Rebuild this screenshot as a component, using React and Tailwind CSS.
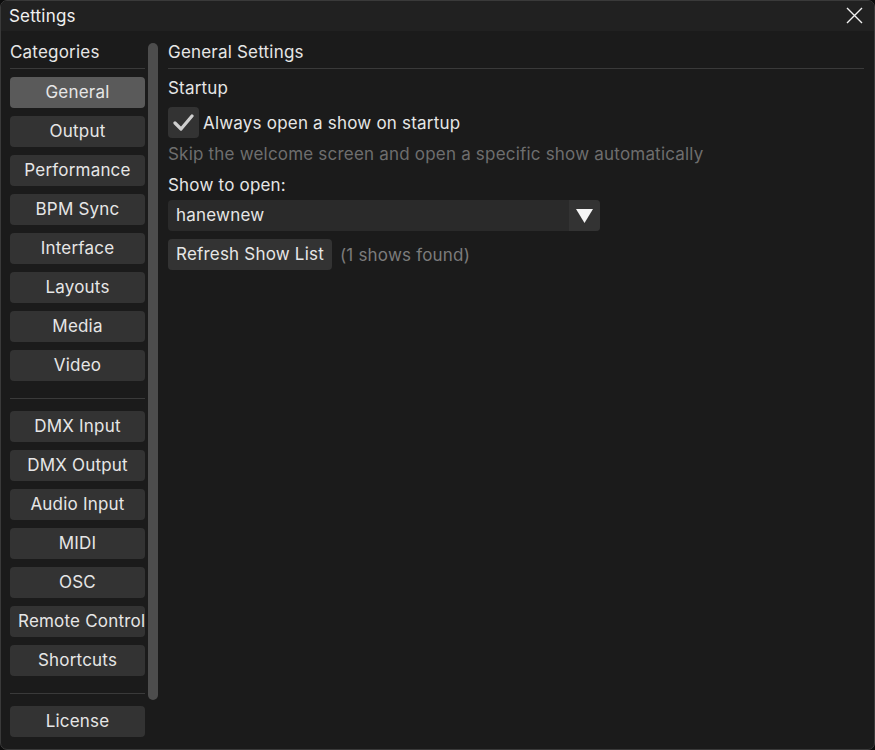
import React from "react";

const groupA = ["General", "Output", "Performance", "BPM Sync", "Interface", "Layouts", "Media", "Video"];
const groupB = ["DMX Input", "DMX Output", "Audio Input", "MIDI", "OSC", "Remote Control", "Shortcuts"];

function CategoryButton({ label, active }) {
  return (
    <button
      type="button"
      className={
        "h-[31px] w-[135px] shrink-0 overflow-hidden whitespace-nowrap rounded-[4px] px-[8px] text-center text-[17px] leading-[31px] text-[#e6e6e6] " +
        (active ? "bg-[#5a5a5a]" : "bg-[#333333]")
      }
    >
      {label}
    </button>
  );
}

function Divider({ className = "" }) {
  return <div className={"h-px w-full bg-[#3a3a3a] " + className} />;
}

export default function App() {
  return (
    <div className="h-[750px] w-[875px] bg-[#0c0c0c] font-['Inter',sans-serif] text-[17px] tracking-[0.2px] text-[#e6e6e6]">
      <div className="flex h-full flex-col overflow-hidden rounded-[7px] border border-[#3a3a3a] bg-[#1b1b1b]">
        {/* title bar */}
        <div className="flex h-[30px] shrink-0 items-center justify-between bg-[#212121] pl-[8px] pr-[11px]">
          <span className="leading-[22px] text-[#f0f0f0]">Settings</span>
          <svg width="17" height="17" viewBox="0 0 17 17" className="mt-[-1px]">
            <path d="M1 1 L16 16 M16 1 L1 16" stroke="#f2f2f2" strokeWidth="1.4" fill="none" />
          </svg>
        </div>

        <div className="flex flex-1 pt-[10px]">
          {/* categories */}
          <div className="flex w-[144px] shrink-0 flex-col gap-[8px] pl-[9px]">
            <div className="flex flex-col">
              <span className="leading-[22px]">Categories</span>
              <Divider className="mt-[5px]" />
            </div>
            {groupA.map((c) => (
              <CategoryButton key={c} label={c} active={c === "General"} />
            ))}
            <Divider className="mb-[4px] mt-[9px]" />
            {groupB.map((c) => (
              <CategoryButton key={c} label={c} />
            ))}
            <Divider className="mb-[4px] mt-[9px]" />
            <CategoryButton label="License" />
          </div>

          {/* scrollbar */}
          <div className="ml-[3px] mt-[2px] h-[657px] w-[10px] shrink-0 rounded-full bg-[#4d4d4d]" />

          {/* content */}
          <div className="ml-[10px] mr-[10px] flex flex-1 flex-col">
            <span className="leading-[22px]">General Settings</span>
            <Divider className="mt-[5px]" />
            <span className="mt-[8px] leading-[22px]">Startup</span>

            <div className="mt-[8px] flex items-center gap-[4px]">
              <div className="flex h-[31px] w-[31px] items-center justify-center rounded-[4px] bg-[#333333]">
                <svg width="21" height="17" viewBox="0 0 21 17">
                  <path d="M2 9 L8 15 L19 2" stroke="#cfcfcf" strokeWidth="3.2" fill="none" strokeLinecap="round" strokeLinejoin="round" />
                </svg>
              </div>
              <span className="leading-[22px]">Always open a show on startup</span>
            </div>

            <span className="mt-[5px] leading-[22px] text-[#6e6e6e]">
              Skip the welcome screen and open a specific show automatically
            </span>
            <span className="mt-[9px] leading-[22px]">Show to open:</span>

            <div className="mt-[4px] flex h-[31px] w-[432px] overflow-hidden rounded-[4px] bg-[#2a2a2a]">
              <span className="flex-1 pl-[8px] leading-[31px]">hanewnew</span>
              <div className="flex w-[31px] items-center justify-center bg-[#333333]">
                <svg width="17" height="14" viewBox="0 0 17 14">
                  <path d="M0 0 H17 L8.5 14 Z" fill="#f5f5f5" />
                </svg>
              </div>
            </div>

            <div className="mt-[8px] flex items-center gap-[8px]">
              <button type="button" className="h-[31px] rounded-[4px] bg-[#333333] px-[8px] leading-[31px] tracking-[0.2px] text-[#e6e6e6]">
                Refresh Show List
              </button>
              <span className="leading-[22px] text-[#7c7c7c]">(1 shows found)</span>
            </div>
          </div>
        </div>
      </div>
    </div>
  );
}
